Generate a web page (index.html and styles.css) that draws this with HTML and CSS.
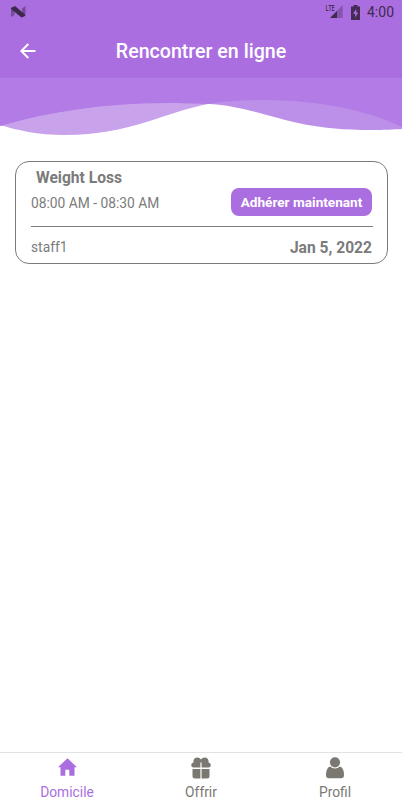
FILE: index.html
```
<!DOCTYPE html>
<html lang="fr">
<head>
	<title>Rencontrer en ligne</title>
	<meta charset="utf-8">
	<meta name="viewport" content="width=device-width,initial-scale=1">
	<link rel="stylesheet" href="styles.css">
</head>
<body>

	<div class="header">
		<div class="status">
			<svg class="logo" width="15" height="12" viewBox="0 0 15 12">
				<path d="M0 2L3.500 0.500V9L0 11zM11 2.500L14.500 0V9.500L11 11z" fill="#764c98"/>
				<path d="M0 2L4 0L14 8.500V10L10.500 11.500L0 3z" fill="#3d294e"/>
			</svg>
			<svg width="19" height="22" viewBox="0 -3 19 22">
				<path d="M17.700 1V14H5z" fill="#8556ab"/>
				<path d="M12 7V14H5z" fill="#3e2a4e"/>
				<text class="lte" x="0.500" y="6.800" textLength="9" lengthAdjust="spacingAndGlyphs">LTE</text>
			</svg>
			<svg class="battery" width="9" height="15" viewBox="0 0 9 15">
				<path d="M2.500 0H6.500V1.500H9V15H0V1.500H2.500z" fill="#442c57"/>
				<path d="M5.300 4L2 8.700H4.200V12.500L7.200 7.500H5.300z" fill="#ad70e0"/>
			</svg>
			<span class="clock">4:00</span>
		</div>
		<div class="titlebar">
			<svg class="back" width="16" height="16" viewBox="0 0 16 16">
				<path d="M15.500 8H1.500M8.300 1L1.300 8L8.300 15" fill="none" stroke="#fff" stroke-width="2"/>
			</svg>
			<h1 class="heading">Rencontrer en ligne</h1>
		</div>
	</div>
	<svg class="waves" width="402" height="60" viewBox="0 0 402 60">
		<path d="M0 0H402V49C370 33 318 22 265 22C240 22 220 24 208 26C165 34 130 57 65 57C38 57 16 52 0 47z" fill="#c8a2eb"/>
		<path d="M0 0H402V51C395 51.500 383 52 372 52C315 52 290 43 265 36.500C245 31 225 26.500 208 26C195 25 180 25 167 25C107 25 50 33 0 48z" fill="#bc8fe8"/>
		<path d="M0 0H402V49C370 33 318 22 265 22C240 22 220 24 208 26C195 25 180 25 167 25C107 25 50 33 0 48z" fill="#b27be5"/>
	</svg>

	<div class="card">
		<h2 class="course">Weight Loss</h2>
		<div class="row">
			<span class="time">08:00 AM - 08:30 AM</span>
			<button class="join">Adhérer maintenant</button>
		</div>
		<div class="row bottom">
			<span class="staff">staff1</span>
			<span class="date">Jan 5, 2022</span>
		</div>
	</div>

	<div class="tabs">
		<div class="tab active">
			<svg width="23" height="22" viewBox="0 0 23 22">
				<path d="M9.300 18.800v-6h4v6h5.200v-8.500h2.500L11.500 1.300 2 10.300h2.500v8.500z" fill="currentColor"/>
			</svg>
			<span>Domicile</span>
		</div>
		<div class="tab">
			<svg width="22" height="22" viewBox="0 0 22 22">
				<path d="M3.500 5.500C2.500 0 9 -1 11 2.500C13 -1 19.500 0 18.500 5.500C21.500 6 21.500 10.500 18.500 10.500H11.600V5.500H10.400V10.500H3.500C0.500 10.500 0.500 6 3.500 5.500z" fill="currentColor"/>
				<path d="M2.500 12H10.400V21.500H5Q2.500 21.500 2.500 19zM11.600 12H19.500V19Q19.500 21.500 17 21.500H11.600z" fill="currentColor"/>
			</svg>
			<span>Offrir</span>
		</div>
		<div class="tab">
			<svg width="22" height="22" viewBox="0 0 22 22">
				<circle cx="11" cy="5.300" r="5.100" fill="currentColor"/>
				<path d="M6 9.500Q11 13.500 16 9.500Q20 11 20 18Q20 21.200 17 21.200H5Q2 21.200 2 18Q2 11 6 9.500z" fill="currentColor"/>
			</svg>
			<span>Profil</span>
		</div>
	</div>

</body>
</html>
```

FILE: styles.css
```
* {
	margin: 0px;
	box-sizing: border-box;
}
body {
	display: flex;
	flex-direction: column;
	height: 100vh;
	overflow: hidden;
	background-color: white;
	font-family: Roboto, sans-serif;
	color: #7b7b7b;
}
.header {
	height: 78px;
	flex: none;
	background-color: #aa6ee0;
}
.status {
	display: flex;
	align-items: center;
	height: 24px;
	padding: 0 8px 0 11px;
}
.logo {
	margin-right: auto;
}
.lte {
	font-family: "Open Sans", sans-serif;
	font-size: 8.5px;
	font-weight: 600;
	fill: #3e2a4e;
}
.battery {
	margin: 0 7px 0 7px;
}
.clock {
	font-size: 14px;
	line-height: 24px;
	color: #3e2a4e;
}
.titlebar {
	display: grid;
	grid-template-columns: 36px 1fr 36px;
	align-items: center;
	height: 54px;
}
.back {
	margin-left: 20px;
}
.heading {
	font-size: 19.6px;
	font-weight: 500;
	text-align: center;
	color: white;
}
.waves {
	display: block;
	flex: none;
}
.card {
	height: 103px;
	margin: 23px 14px 0 15px;
	padding: 7px 14px 0 15px;
	border: 1px solid #7b7b7b;
	border-radius: 14px;
}
.course {
	padding-left: 5px;
	font-size: 15.6px;
	line-height: 19px;
	font-weight: bold;
}
.row {
	display: flex;
	justify-content: space-between;
	font-size: 13.8px;
}
.time {
	line-height: 30px;
}
.join {
	width: 141px;
	height: 28px;
	margin-right: 1px;
	padding: 0;
	border: 0px;
	border-radius: 8px;
	background-color: #aa6ee0;
	color: white;
	font-family: inherit;
	font-size: 13.6px;
	font-weight: bold;
}
.bottom {
	margin-top: 8px;
	border-top: 1px solid #7b7b7b;
	line-height: 40px;
}
.date {
	padding-right: 1px;
	font-size: 15.6px;
	line-height: 43px;
	font-weight: bold;
}
.tabs {
	display: flex;
	height: 48px;
	margin-top: auto;
	border-top: 1px solid #e2e2e2;
}
.tab {
	display: flex;
	flex: 1;
	flex-direction: column;
	align-items: center;
	padding-top: 4px;
	font-size: 13.8px;
	line-height: 26px;
	color: #7b7872;
}
.tab svg {
	flex: none;
}
.active {
	color: #aa6ee0;
}
```
